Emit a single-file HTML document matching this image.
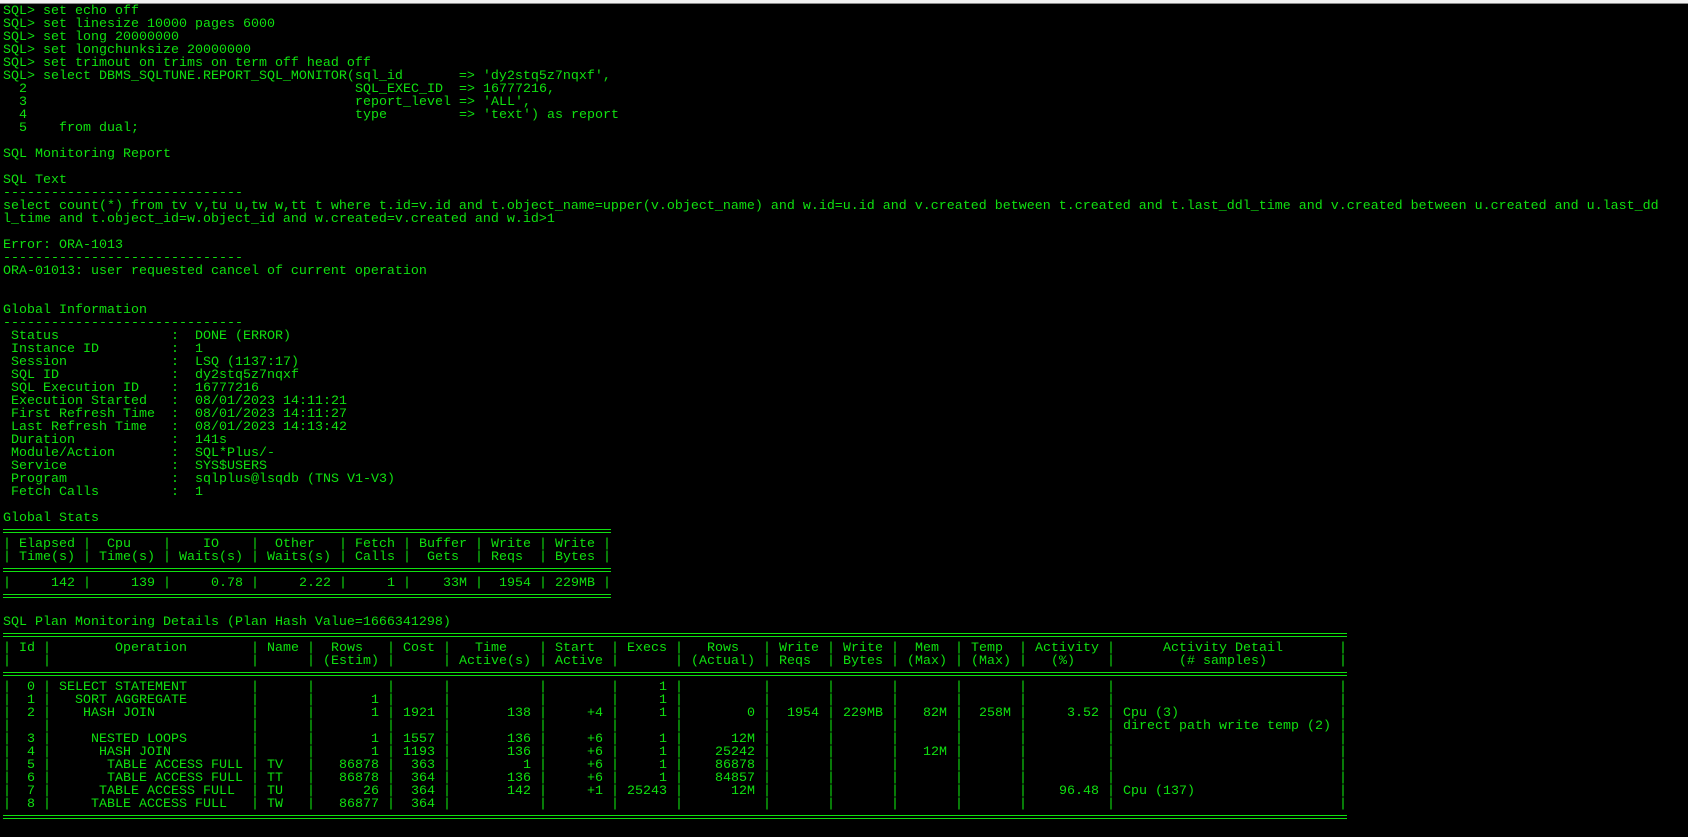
<!DOCTYPE html>
<html><head><meta charset="utf-8"><style>
html,body{margin:0;padding:0;background:#000;width:1688px;height:837px;overflow:hidden}
.top{position:absolute;left:0;top:0;width:1688px;height:3px;background:#f2f2f2;border-bottom:1px solid #8a8a8a}
pre{position:absolute;left:3px;top:4.5px;margin:0;font-family:"Liberation Mono",monospace;font-size:13.333px;line-height:13px;color:#10e010;white-space:pre}
pre div{height:13px}
b{font-weight:normal;display:inline-block;white-space:pre;vertical-align:top;height:13px}
.R{text-align:right}
.eq{position:relative}
.eq:before{content:"";position:absolute;left:0;top:4px;height:2px;border-top:1px solid #10e010;border-bottom:1px solid #10e010;width:var(--w)}
.a{width:32px}.bb{width:200px}.c{width:48px}.d{width:72px}.e{width:48px}.f{width:88px}.g{width:64px}.h{width:56px}.i{width:80px}.j{width:56px}.k{width:56px}.l{width:56px}.m{width:56px}.n{width:80px}.o{width:224px}
.s1{width:72px}.s2{width:72px}.s3{width:80px}.s4{width:80px}.s5{width:56px}.s6{width:64px}.s7{width:56px}.s8{width:56px}
.L{width:168px}
</style></head><body>
<div class="top"></div>
<pre><div>SQL&gt; set echo off</div><div>SQL&gt; set linesize 10000 pages 6000</div><div>SQL&gt; set long 20000000</div><div>SQL&gt; set longchunksize 20000000</div><div>SQL&gt; set trimout on trims on term off head off</div><div>SQL&gt; select DBMS_SQLTUNE.REPORT_SQL_MONITOR(<b style="width:104px">sql_id</b>=&gt; 'dy2stq5z7nqxf',</div><div><b style="width:352px">  2</b><b style="width:104px">SQL_EXEC_ID</b>=&gt; 16777216,</div><div><b style="width:352px">  3</b><b style="width:104px">report_level</b>=&gt; 'ALL',</div><div><b style="width:352px">  4</b><b style="width:104px">type</b>=&gt; 'text') as report</div><div>  5    from dual;</div><div></div><div>SQL Monitoring Report</div><div></div><div>SQL Text</div><div>------------------------------</div><div>select count(*) from tv v,tu u,tw w,tt t where t.id=v.id and t.object_name=upper(v.object_name) and w.id=u.id and v.created between t.created and t.last_ddl_time and v.created between u.created and u.last_dd</div><div>l_time and t.object_id=w.object_id and w.created=v.created and w.id&gt;1</div><div></div><div>Error: ORA-1013</div><div>------------------------------</div><div>ORA-01013: user requested cancel of current operation</div><div></div><div></div><div>Global Information</div><div>------------------------------</div><div><b class="L"> Status</b>:  DONE (ERROR)</div><div><b class="L"> Instance ID</b>:  1</div><div><b class="L"> Session</b>:  LSQ (1137:17)</div><div><b class="L"> SQL ID</b>:  dy2stq5z7nqxf</div><div><b class="L"> SQL Execution ID</b>:  16777216</div><div><b class="L"> Execution Started</b>:  08/01/2023 14:11:21</div><div><b class="L"> First Refresh Time</b>:  08/01/2023 14:11:27</div><div><b class="L"> Last Refresh Time</b>:  08/01/2023 14:13:42</div><div><b class="L"> Duration</b>:  141s</div><div><b class="L"> Module/Action</b>:  SQL*Plus/-</div><div><b class="L"> Service</b>:  SYS$USERS</div><div><b class="L"> Program</b>:  sqlplus@lsqdb (TNS V1-V3)</div><div><b class="L"> Fetch Calls</b>:  1</div><div></div><div>Global Stats</div><div class="eq" style="--w:608px"></div><div>|<b class="s1"> Elapsed</b>|<b class="s2">  Cpu</b>|<b class="s3">    IO</b>|<b class="s4">  Other</b>|<b class="s5"> Fetch</b>|<b class="s6"> Buffer</b>|<b class="s7"> Write</b>|<b class="s8"> Write</b>|</div><div>|<b class="s1"> Time(s)</b>|<b class="s2"> Time(s)</b>|<b class="s3"> Waits(s)</b>|<b class="s4"> Waits(s)</b>|<b class="s5"> Calls</b>|<b class="s6">  Gets</b>|<b class="s7"> Reqs</b>|<b class="s8"> Bytes</b>|</div><div class="eq" style="--w:608px"></div><div>|<b class="s1 R">142 </b>|<b class="s2 R">139 </b>|<b class="s3 R">0.78 </b>|<b class="s4 R">2.22 </b>|<b class="s5 R">1 </b>|<b class="s6 R">33M </b>|<b class="s7 R">1954 </b>|<b class="s8 R">229MB </b>|</div><div class="eq" style="--w:608px"></div><div></div><div>SQL Plan Monitoring Details (Plan Hash Value=1666341298)</div><div class="eq" style="--w:1344px"></div><div>|<b class="a"> Id</b>|<b class="bb">        Operation</b>|<b class="c"> Name</b>|<b class="d">  Rows</b>|<b class="e"> Cost</b>|<b class="f">   Time</b>|<b class="g"> Start</b>|<b class="h"> Execs</b>|<b class="i">   Rows</b>|<b class="j"> Write</b>|<b class="k"> Write</b>|<b class="l">  Mem</b>|<b class="m"> Temp</b>|<b class="n"> Activity</b>|<b class="o">      Activity Detail</b>|</div><div>|<b class="a"></b>|<b class="bb"></b>|<b class="c"></b>|<b class="d"> (Estim)</b>|<b class="e"></b>|<b class="f"> Active(s)</b>|<b class="g"> Active</b>|<b class="h"></b>|<b class="i"> (Actual)</b>|<b class="j"> Reqs</b>|<b class="k"> Bytes</b>|<b class="l"> (Max)</b>|<b class="m"> (Max)</b>|<b class="n">   (%)</b>|<b class="o">        (# samples)</b>|</div><div class="eq" style="--w:1344px"></div><div>|<b class="a">  0</b>|<b class="bb"> SELECT STATEMENT</b>|<b class="c"></b>|<b class="d R"></b>|<b class="e R"></b>|<b class="f R"></b>|<b class="g R"></b>|<b class="h R">1 </b>|<b class="i R"></b>|<b class="j R"></b>|<b class="k"></b>|<b class="l R"></b>|<b class="m R"></b>|<b class="n R"></b>|<b class="o"></b>|</div><div>|<b class="a">  1</b>|<b class="bb">   SORT AGGREGATE</b>|<b class="c"></b>|<b class="d R">1 </b>|<b class="e R"></b>|<b class="f R"></b>|<b class="g R"></b>|<b class="h R">1 </b>|<b class="i R"></b>|<b class="j R"></b>|<b class="k"></b>|<b class="l R"></b>|<b class="m R"></b>|<b class="n R"></b>|<b class="o"></b>|</div><div>|<b class="a">  2</b>|<b class="bb">    HASH JOIN</b>|<b class="c"></b>|<b class="d R">1 </b>|<b class="e R">1921 </b>|<b class="f R">138 </b>|<b class="g R">+4 </b>|<b class="h R">1 </b>|<b class="i R">0 </b>|<b class="j R">1954 </b>|<b class="k"> 229MB</b>|<b class="l R">82M </b>|<b class="m R">258M </b>|<b class="n R">3.52 </b>|<b class="o"> Cpu (3)</b>|</div><div>|<b class="a"></b>|<b class="bb"></b>|<b class="c"></b>|<b class="d R"></b>|<b class="e R"></b>|<b class="f R"></b>|<b class="g R"></b>|<b class="h R"></b>|<b class="i R"></b>|<b class="j R"></b>|<b class="k"></b>|<b class="l R"></b>|<b class="m R"></b>|<b class="n R"></b>|<b class="o"> direct path write temp (2)</b>|</div><div>|<b class="a">  3</b>|<b class="bb">     NESTED LOOPS</b>|<b class="c"></b>|<b class="d R">1 </b>|<b class="e R">1557 </b>|<b class="f R">136 </b>|<b class="g R">+6 </b>|<b class="h R">1 </b>|<b class="i R">12M </b>|<b class="j R"></b>|<b class="k"></b>|<b class="l R"></b>|<b class="m R"></b>|<b class="n R"></b>|<b class="o"></b>|</div><div>|<b class="a">  4</b>|<b class="bb">      HASH JOIN</b>|<b class="c"></b>|<b class="d R">1 </b>|<b class="e R">1193 </b>|<b class="f R">136 </b>|<b class="g R">+6 </b>|<b class="h R">1 </b>|<b class="i R">25242 </b>|<b class="j R"></b>|<b class="k"></b>|<b class="l R">12M </b>|<b class="m R"></b>|<b class="n R"></b>|<b class="o"></b>|</div><div>|<b class="a">  5</b>|<b class="bb">       TABLE ACCESS FULL</b>|<b class="c"> TV</b>|<b class="d R">86878 </b>|<b class="e R">363 </b>|<b class="f R">1 </b>|<b class="g R">+6 </b>|<b class="h R">1 </b>|<b class="i R">86878 </b>|<b class="j R"></b>|<b class="k"></b>|<b class="l R"></b>|<b class="m R"></b>|<b class="n R"></b>|<b class="o"></b>|</div><div>|<b class="a">  6</b>|<b class="bb">       TABLE ACCESS FULL</b>|<b class="c"> TT</b>|<b class="d R">86878 </b>|<b class="e R">364 </b>|<b class="f R">136 </b>|<b class="g R">+6 </b>|<b class="h R">1 </b>|<b class="i R">84857 </b>|<b class="j R"></b>|<b class="k"></b>|<b class="l R"></b>|<b class="m R"></b>|<b class="n R"></b>|<b class="o"></b>|</div><div>|<b class="a">  7</b>|<b class="bb">      TABLE ACCESS FULL</b>|<b class="c"> TU</b>|<b class="d R">26 </b>|<b class="e R">364 </b>|<b class="f R">142 </b>|<b class="g R">+1 </b>|<b class="h R">25243 </b>|<b class="i R">12M </b>|<b class="j R"></b>|<b class="k"></b>|<b class="l R"></b>|<b class="m R"></b>|<b class="n R">96.48 </b>|<b class="o"> Cpu (137)</b>|</div><div>|<b class="a">  8</b>|<b class="bb">     TABLE ACCESS FULL</b>|<b class="c"> TW</b>|<b class="d R">86877 </b>|<b class="e R">364 </b>|<b class="f R"></b>|<b class="g R"></b>|<b class="h R"></b>|<b class="i R"></b>|<b class="j R"></b>|<b class="k"></b>|<b class="l R"></b>|<b class="m R"></b>|<b class="n R"></b>|<b class="o"></b>|</div><div class="eq" style="--w:1344px"></div></pre>
</body></html>
